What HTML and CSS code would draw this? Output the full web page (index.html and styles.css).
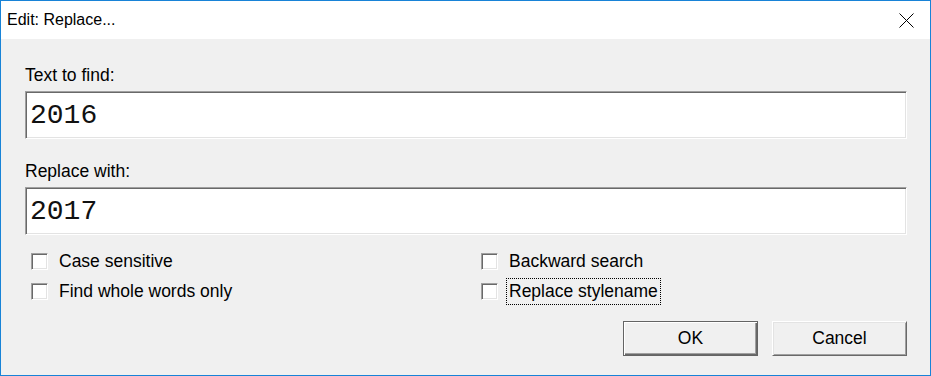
FILE: index.html
```html
<!DOCTYPE html>
<html lang="en">
<head>
  <meta charset="UTF-8">
  <title>Edit: Replace...</title>
  <link rel="stylesheet" href="styles.css">
</head>
<body>
  <div class="window">
    <div class="titlebar">
      <span class="title">Edit: Replace...</span>
      <div class="close">
        <svg width="15" height="15" viewBox="0 0 15 15">
          <path d="M0.5 0.5 L14.5 14.5 M14.5 0.5 L0.5 14.5" stroke="#000" stroke-width="1" fill="none"/>
        </svg>
      </div>
    </div>

    <div class="dialog">
      <label class="field-label" for="find">Text to find:</label>
      <input type="text" id="find" class="field" value="2016">

      <label class="field-label" for="replace">Replace with:</label>
      <input type="text" id="replace" class="field last" value="2017">

      <div class="options">
        <label class="check"><span class="box"></span><span class="check-text">Case sensitive</span></label>
        <label class="check"><span class="box"></span><span class="check-text">Backward search</span></label>
        <label class="check"><span class="box"></span><span class="check-text">Find whole words only</span></label>
        <label class="check"><span class="box"></span><span class="check-text focused">Replace stylename</span></label>
      </div>

      <div class="buttons">
        <button class="btn default">OK</button>
        <button class="btn">Cancel</button>
      </div>
    </div>
  </div>
</body>
</html>
```

FILE: styles.css
```css
body {
  margin: 0;
  font-family: "Liberation Sans", Arial, sans-serif;
  font-size: 17.5px;
  color: #000;
  background: #fff;
}

.window {
  box-sizing: border-box;
  width: 931px;
  height: 376px;
  border: 1px solid #1883d7;
  background: #f0f0f0;
  display: flex;
  flex-direction: column;
}

.titlebar {
  height: 38px;
  flex: none;
  background: #fff;
  display: flex;
  align-items: center;
  justify-content: space-between;
}

.title {
  padding-left: 6px;
  font-size: 16px;
}

.close {
  width: 48px;
  height: 38px;
  display: flex;
  align-items: center;
  justify-content: center;
}

.dialog {
  padding: 26px 23px 0 24px;
}

.field-label {
  display: block;
  line-height: 20px;
  margin-bottom: 6px;
}

.field {
  display: block;
  box-sizing: border-box;
  width: 100%;
  height: 48px;
  margin: 0 0 22px 0;
  padding: 0 0 0 4px;
  font-family: "Liberation Mono", "Courier New", monospace;
  font-size: 28px;
  color: #111;
  background: #fff;
  border-style: solid;
  border-width: 1px;
  border-color: #a0a0a0 #fff #fff #a0a0a0;
  box-shadow: inset 1px 1px #696969, inset -1px -1px #e3e3e3;
  outline: none;
}

.field.last {
  margin-bottom: 13px;
}

.options {
  display: grid;
  grid-template-columns: 450px 1fr;
  row-gap: 3px;
  padding-left: 6px;
}

.check {
  display: flex;
  align-items: center;
  height: 27px;
}

.box {
  box-sizing: border-box;
  width: 17px;
  height: 17px;
  margin-right: 8px;
  background: #fff;
  border-style: solid;
  border-width: 1px;
  border-color: #a0a0a0 #fff #fff #a0a0a0;
  box-shadow: inset 1px 1px #696969, inset -1px -1px #e3e3e3;
}

.check-text {
  display: flex;
  align-items: center;
  height: 25px;
  padding: 0 2px;
  border: 1px dotted transparent;
}

.check-text.focused {
  border-color: #000;
}

.buttons {
  display: flex;
  justify-content: flex-end;
  gap: 14px;
  margin-top: 16px;
}

.btn {
  box-sizing: border-box;
  width: 135px;
  height: 35px;
  padding: 0;
  font-family: inherit;
  font-size: 17.5px;
  color: #000;
  background: #f0f0f0;
  border-style: solid;
  border-width: 1px;
  border-color: #fff #696969 #696969 #fff;
  box-shadow: inset 1px 1px #e3e3e3, inset -1px -1px #a0a0a0;
}

.btn.default {
  border-color: #646464;
  box-shadow: inset 1px 1px #fff, inset -1px -1px #696969, inset -2px -2px #a0a0a0;
}
```
